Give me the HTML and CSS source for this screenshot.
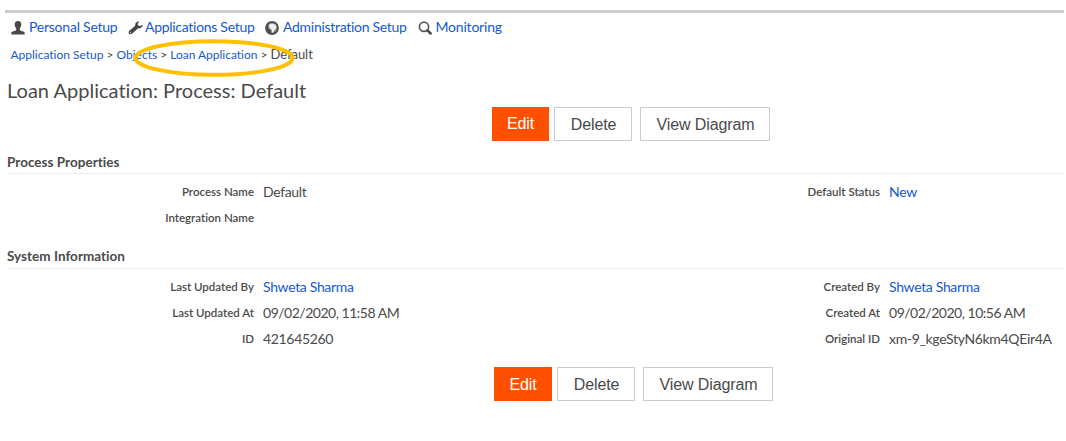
FILE: index.html
```html
<!DOCTYPE html>
<html lang="en">
<head>
<meta charset="utf-8">
<title>Loan Application: Process: Default</title>
<link rel="stylesheet" href="styles.css">
</head>
<body>
<main class="page">
  <nav class="nav">
    <a class="nav-item personal"><svg class="icon" viewBox="0 0 14 14"><path fill="#484848" d="M7 0C4.700 0 3.700 1.400 3.700 3.300c0 1.700.6 3 1.500 3.900v1.600c0 .5-.4.8-.9 1L1.700 10.500C.7 10.900.3 11.500.3 12.300V13.500h13.400v-1.200c0-.8-.4-1.400-1.400-1.800L9.700 9.800c-.5-.2-.9-.5-.9-1V7.200c.9-.9 1.500-2.200 1.500-3.900C10.300 1.400 9.300 0 7 0z"/></svg><span>Personal Setup</span></a>
    <a class="nav-item apps"><svg class="icon wrench" viewBox="0 0 15 14"><path fill="#484848" d="M14.700 3.600c.2 2.600-2 4.300-4.500 3.700L4.300 12.500C3.500 13.400 2 13.500 1.200 12.700.3 11.900.4 10.500 1.300 9.800L7.200 4.800C6.800 2.200 8.600.2 11.400.6L9.700 2.700l.5 1.900 2.100.4z"/><circle cx="2.500" cy="11.400" r=".6" fill="#ccc"/></svg><span>Applications Setup</span></a>
    <a class="nav-item admin"><svg class="icon" viewBox="0 0 14 14"><circle cx="7" cy="7" r="6" fill="#858585" stroke="#505050" stroke-width="1.800"/><path fill="#eee" d="M4 4.600 5 3l2.400-.6 1.500.9 1.500.2 1 2.300-.6 2.200-1.500 1.500-1.200 2.200-1.100-.2L6.500 8.600 4.600 7.600z"/><path fill="#4d4d4d" d="M2.500 3.500C.9 6.400 1.700 11 5.700 12.500L6 9 3.700 7.800z"/></svg><span>Administration Setup</span></a>
    <a class="nav-item monitor"><svg class="icon" viewBox="0 0 14 14"><circle cx="6" cy="5.800" r="4.600" fill="none" stroke="#5a5a5a" stroke-width="1.700"/><path d="M9.500 9.400 12.600 12.500" stroke="#484848" stroke-width="2.500" stroke-linecap="round"/></svg><span>Monitoring</span></a>
  </nav>
  <div class="crumbs"><a>Application Setup</a> &gt; <a>Objects</a> &gt; <a>Loan Application</a> &gt; <span class="current">Default</span>
    <svg class="highlight" viewBox="0 0 162 38"><ellipse cx="81" cy="19" rx="78.500" ry="16.800" fill="none" stroke="#ffc000" stroke-width="4"/></svg>
  </div>
  <h1 class="title">Loan Application: Process: Default</h1>
  <div class="actions top"><button class="btn primary">Edit</button><button class="btn">Delete</button><button class="btn">View Diagram</button></div>
  <section class="section process">
    <h2 class="heading">Process Properties</h2>
    <div class="fields">
      <span class="label">Process Name</span><span class="value">Default</span><span class="label">Default Status</span><a class="value">New</a>
      <span class="label">Integration Name</span><span class="value"></span>
    </div>
  </section>
  <section class="section system">
    <h2 class="heading">System Information</h2>
    <div class="fields">
      <span class="label">Last Updated By</span><a class="value">Shweta Sharma</a><span class="label">Created By</span><a class="value">Shweta Sharma</a>
      <span class="label">Last Updated At</span><span class="value date">09/02/2020, 11:58 AM</span><span class="label">Created At</span><span class="value date">09/02/2020, 10:56 AM</span>
      <span class="label">ID</span><span class="value">421645260</span><span class="label">Original ID</span><span class="value">xm-9_kgeStyN6km4QEir4A</span>
    </div>
  </section>
  <div class="actions bottom"><button class="btn primary">Edit</button><button class="btn">Delete</button><button class="btn">View Diagram</button></div>
</main>
</body>
</html>
```
FILE: styles.css
```css
* { box-sizing: border-box; }
body { margin: 0; background: #fff; color: #4a4a4a; font-family: Lato, sans-serif; font-size: 14px; font-variant-ligatures: none; overflow: hidden; }
a { color: #1559cf; }
.page { height: 441px; padding: 10px 2px 0 5px; }
.nav { display: flex; height: 34px; padding-top: 4px; border-top: 3px solid #ccc; line-height: 20px; letter-spacing: -0.290px; white-space: nowrap; }
.nav-item { display: flex; padding-left: 6px; }
.icon { flex: none; width: 14px; height: 14px; margin: 4px 4px 0 0; }
.wrench { width: 15px; margin-right: 2px; }
.personal { width: 117px; letter-spacing: -0.230px; }
.apps { width: 137px; }
.admin { width: 153px; }
.monitor { padding-left: 5.500px; letter-spacing: -0.200px; }
.crumbs { position: relative; height: 20px; padding-left: 5.500px; font-size: 12px; line-height: 20px; letter-spacing: -0.010px; white-space: nowrap; }
.current { font-size: 13px; letter-spacing: -0.050px; }
.highlight { position: absolute; left: 128px; top: -5px; width: 162px; height: 38px; }
.title { height: 30px; margin: 11px 0 0 2px; font-size: 20px; font-weight: 400; line-height: 30px; letter-spacing: 0.015px; }
.actions { display: flex; height: 34px; }
.top { margin: 2px 0 0 487px; }
.bottom { margin: 14px 0 0 489px; }
.btn { width: 78px; height: 34px; margin: 0 8px 0 0; padding: 1px 0 0 1px; border: 1px solid #ccc; background: #fff; color: #4a4a4a; font: 16px "Liberation Sans", sans-serif; letter-spacing: -0.100px; }
.btn:last-child { width: 130px; }
.btn.primary { width: 57px; margin-right: 5px; padding: 0; border-color: #ff5000; background: #ff5000; color: #fff; }
.bottom .primary { width: 58px; padding-top: 1px; }
.section { margin-left: 2px; }
.process { height: 94px; margin-top: 12px; }
.heading { height: 21px; margin: 0; border-bottom: 1px solid #eee; font-size: 13.500px; font-weight: 700; line-height: 19px; letter-spacing: 0.030px; }
.fields { display: grid; grid-template-columns: 247px 379px 247px 1fr; grid-auto-rows: 26px; padding-top: 5px; line-height: 26px; }
.label { text-align: right; font-size: 11.500px; font-weight: 600; }
.value { padding-left: 9px; letter-spacing: -0.330px; white-space: nowrap; }
.date { letter-spacing: -0.490px; }
.system { height: 106px; }
.system .heading { height: 22px; line-height: 19px; }
```
